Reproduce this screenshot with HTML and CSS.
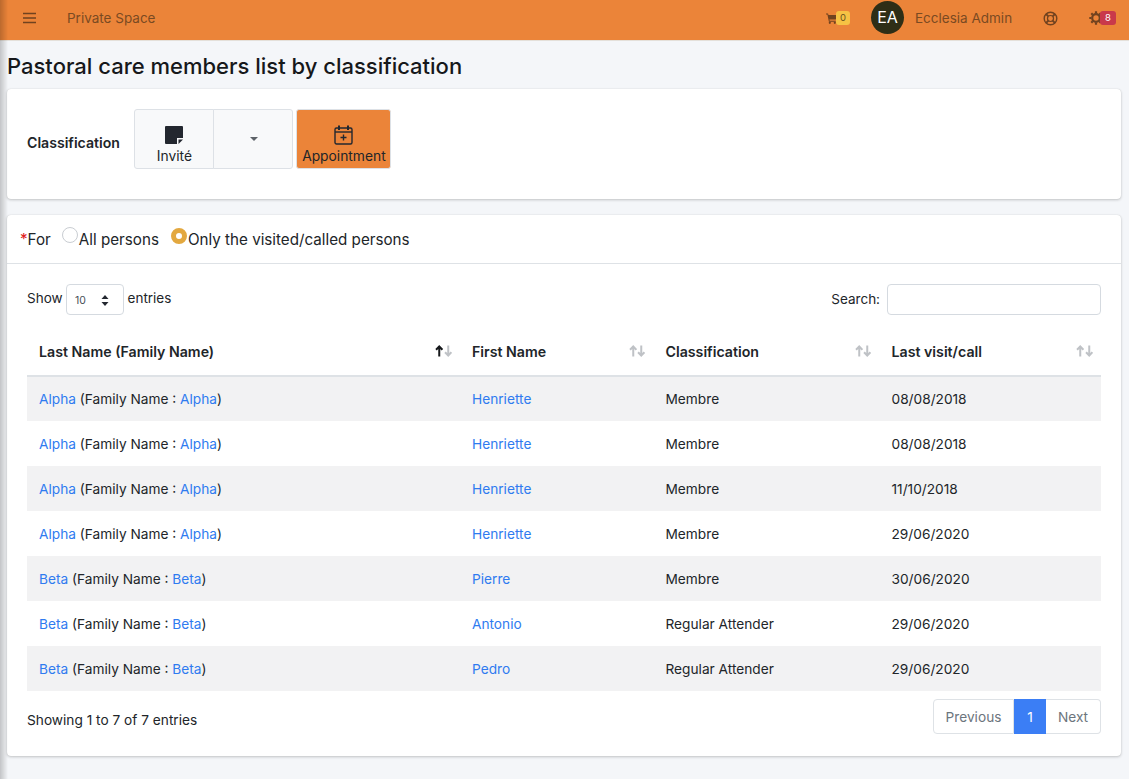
FILE: index.html
```html
<!DOCTYPE html>
<html lang="en">
<head>
    <meta charset="UTF-8">
    <meta name="viewport" content="width=device-width, initial-scale=1.0">
    <title>Pastoral care members list by classification</title>
    <link rel="stylesheet" href="styles.css">
</head>
<body>
    <div class="side-shadow"></div>
    <svg class="sprite" width="0" height="0">
        <symbol id="sort-up" viewBox="0 0 8 12"><path d="M4 11.500V1.500M.8 4.800L4 1.500l3.200 3.300" fill="none" stroke="currentColor" stroke-width="2"/></symbol>
        <symbol id="sort-down" viewBox="0 0 8 12"><path d="M4 .5v10M.8 7.200L4 10.500l3.200-3.300" fill="none" stroke="currentColor" stroke-width="2"/></symbol>
    </svg>
    <nav class="navbar">
        <div class="nav-left">
            <svg class="nav-burger" width="13" height="12" viewBox="0 0 13 12"><path d="M0 1.5h13M0 6h13M0 10.5h13" stroke="#70421f" stroke-width="1.5" fill="none"/></svg>
            <a class="nav-link" href="#">Private Space</a>
        </div>
        <div class="nav-right">
            <div class="nav-cart">
                <svg width="11" height="11" viewBox="0 0 11 11"><path d="M0 .5h2l.5 1.5H11L9.8 6.5H3.4l.3 1.2h6v1H2.9L1.4 1.5H0z" fill="#70421f"/><circle cx="3.8" cy="9.8" r="1.1" fill="#70421f"/><circle cx="8.8" cy="9.8" r="1.1" fill="#70421f"/></svg>
                <span class="badge badge-yellow">0</span>
            </div>
            <div class="avatar">EA</div>
            <a class="nav-link nav-user" href="#">Ecclesia Admin</a>
            <svg class="nav-help" width="15" height="15" viewBox="0 0 15 15" fill="none" stroke="#70421f"><circle cx="7.5" cy="7.5" r="6.3" stroke-width="1.4"/><circle cx="7.5" cy="7.5" r="3" stroke-width="1.2"/><path d="M3 3l2.4 2.4M12 3L9.6 5.4M3 12l2.4-2.4M12 12L9.6 9.6" stroke-width="1.8"/></svg>
            <div class="nav-gear">
                <svg width="14" height="14" viewBox="0 0 14 14" fill="none" stroke="#70421f"><circle cx="7" cy="7" r="3.800" stroke-width="2.200"/><path d="M7 .3v2M7 11.700v2M.3 7h2M11.700 7h2M2.300 2.300l1.400 1.400M10.300 10.300l1.400 1.400M11.700 2.300l-1.400 1.400M3.700 10.300l-1.400 1.400" stroke-width="2.200"/></svg>
                <span class="badge badge-red">8</span>
            </div>
        </div>
    </nav>

    <main class="content">
        <h1 class="page-title">Pastoral care members list by classification</h1>

        <section class="card card-filter">
            <label class="filter-label">Classification</label>
            <div class="btn-group">
                <button class="btn btn-light btn-note">
                    <svg width="18" height="18" viewBox="0 0 18 18"><path d="M1 0h16a1 1 0 0 1 1 1v11h-6v6H1a1 1 0 0 1-1-1V1a1 1 0 0 1 1-1z" fill="#23272f"/><path d="M13.500 13.500H18L13.500 18z" fill="#23272f"/></svg>
                    <span>Invité</span>
                </button>
                <button class="btn btn-light btn-caret"><span class="caret"></span></button>
            </div>
            <button class="btn btn-orange">
                <svg width="19" height="20" viewBox="0 0 19 20" fill="none" stroke="#23272f" stroke-width="1.400"><rect x="1" y="3" width="17" height="16" rx="1.500"/><path d="M1 7h17"/><path d="M5 .5v4.500M14 .5v4.500" stroke-width="2"/><path d="M9.500 9.500v6M6.500 12.500h6"/></svg>
                <span>Appointment</span>
            </button>
        </section>

        <section class="card card-list">
            <div class="list-head">
                <span class="for-label"><span class="required">*</span>For</span>
                <label class="radio-item"><span class="radio"></span>All persons</label>
                <label class="radio-item"><span class="radio radio-on"></span>Only the visited/called persons</label>
            </div>
            <div class="list-body">
                <div class="table-tools">
                    <div class="tool-length">
                        Show
                        <div class="fake-select">
                            <span>10</span>
                            <svg width="8" height="11" viewBox="0 0 8 11"><path d="M4 0l3.500 4H.5zM4 11L.5 7h7z" fill="#23272f"/></svg>
                        </div>
                        entries
                    </div>
                    <div class="tool-search"><span class="search-label">Search:</span> <input type="text" class="search-input"></div>
                </div>

                <table class="data-table">
                    <thead>
                        <tr>
                            <th class="col-last">Last Name (Family Name)<span class="sort"><svg class="on"><use href="#sort-up"/></svg><svg><use href="#sort-down"/></svg></span></th>
                            <th class="col-first">First Name<span class="sort"><svg><use href="#sort-up"/></svg><svg><use href="#sort-down"/></svg></span></th>
                            <th class="col-class">Classification<span class="sort"><svg><use href="#sort-up"/></svg><svg><use href="#sort-down"/></svg></span></th>
                            <th class="col-date">Last visit/call<span class="sort"><svg><use href="#sort-up"/></svg><svg><use href="#sort-down"/></svg></span></th>
                        </tr>
                    </thead>
                    <tbody>
                        <tr><td><a href="#">Alpha</a> (Family Name : <a href="#">Alpha</a>)</td><td><a href="#">Henriette</a></td><td>Membre</td><td>08/08/2018</td></tr>
                        <tr><td><a href="#">Alpha</a> (Family Name : <a href="#">Alpha</a>)</td><td><a href="#">Henriette</a></td><td>Membre</td><td>08/08/2018</td></tr>
                        <tr><td><a href="#">Alpha</a> (Family Name : <a href="#">Alpha</a>)</td><td><a href="#">Henriette</a></td><td>Membre</td><td>11/10/2018</td></tr>
                        <tr><td><a href="#">Alpha</a> (Family Name : <a href="#">Alpha</a>)</td><td><a href="#">Henriette</a></td><td>Membre</td><td>29/06/2020</td></tr>
                        <tr><td><a href="#">Beta</a> (Family Name : <a href="#">Beta</a>)</td><td><a href="#">Pierre</a></td><td>Membre</td><td>30/06/2020</td></tr>
                        <tr><td><a href="#">Beta</a> (Family Name : <a href="#">Beta</a>)</td><td><a href="#">Antonio</a></td><td>Regular Attender</td><td>29/06/2020</td></tr>
                        <tr><td><a href="#">Beta</a> (Family Name : <a href="#">Beta</a>)</td><td><a href="#">Pedro</a></td><td>Regular Attender</td><td>29/06/2020</td></tr>
                    </tbody>
                </table>

                <div class="table-foot">
                    <div class="table-info">Showing 1 to 7 of 7 entries</div>
                    <div class="pager">
                        <a href="#" class="page-item page-prev">Previous</a>
                        <a href="#" class="page-item page-current">1</a>
                        <a href="#" class="page-item page-next">Next</a>
                    </div>
                </div>
            </div>
        </section>
    </main>
</body>
</html>
```

FILE: styles.css
```css
* {
    box-sizing: border-box;
}

body {
    font-family: 'Inter', 'Liberation Sans', sans-serif;
    font-size: 13.7px;
    background-color: #F4F6F9;
    color: #212529;
    margin: 0;
    padding: 0;
    min-height: 100vh;
    overflow: hidden;
}

a {
    color: #2F7BF0;
    text-decoration: none;
}

.sprite {
    position: absolute;
}

.side-shadow {
    position: fixed;
    top: 0;
    left: 0;
    bottom: 0;
    width: 8px;
    background: linear-gradient(to right, rgba(0, 0, 0, 0.2), rgba(0, 0, 0, 0));
    z-index: 10;
}

.navbar {
    height: 41px;
    background: #EB8439;
    border-bottom: 1px solid #E4E0DA;
    display: flex;
    justify-content: space-between;
    align-items: center;
    padding: 0 13px 4px 23px;
}

.nav-left,
.nav-right {
    display: flex;
    align-items: center;
}

.nav-burger {
    margin-right: 31px;
}

.nav-link {
    color: #7A4A22;
    font-size: 13.5px;
}

.nav-cart {
    display: flex;
    align-items: center;
    margin-right: 21px;
}

.badge {
    font-size: 9.5px;
    line-height: 14px;
    height: 14px;
    padding: 0 4px;
    border-radius: 3px;
    text-align: center;
}

.badge-yellow {
    background: #F6C244;
    color: #6b5320;
    margin-left: -1px;
}

.badge-red {
    background: #C9394A;
    color: white;
    margin-left: -3px;
    padding: 0 5px;
}

.avatar {
    width: 33px;
    height: 33px;
    margin-top: -2px;
    border-radius: 50%;
    background: #2E2E16;
    color: white;
    font-size: 16px;
    line-height: 33px;
    text-align: center;
}

.nav-user {
    margin-left: 11px;
    margin-right: 31px;
}

.nav-help {
    margin-right: 31px;
}

.nav-gear {
    display: flex;
    align-items: center;
}

.content {
    padding: 0 8px 0 7px;
}

.page-title {
    font-size: 22px;
    font-weight: 500;
    line-height: 29px;
    margin: 0;
    padding: 11px 0 8px;
    color: #16181b;
}

.card {
    background: white;
    border-radius: 4px;
    box-shadow: 0 0 1px rgba(0, 0, 0, 0.15), 0 1px 3px rgba(0, 0, 0, 0.2);
}

.card-filter {
    height: 110px;
    margin-bottom: 16px;
    padding: 20px;
    display: flex;
    align-items: flex-start;
}

.filter-label {
    font-weight: 600;
    font-size: 14.1px;
    margin-top: 25px;
    margin-right: 14.5px;
}

.btn-group {
    display: flex;
}

.btn {
    font-family: inherit;
    font-size: 13.8px;
    height: 60px;
    border: 1px solid #DDE1E6;
    color: #212529;
    padding: 0;
    display: flex;
    flex-direction: column;
    align-items: center;
    justify-content: flex-start;
    border-radius: 3px;
}

.btn-light {
    background: #F8F9FA;
}

.btn-note {
    width: 80px;
    padding-top: 16px;
    border-radius: 3px 0 0 3px;
    gap: 4px;
}

.btn-caret {
    width: 80px;
    margin-left: -1px;
    padding-top: 27px;
    padding-left: 2px;
    border-radius: 0 3px 3px 0;
}

.caret {
    border-top: 4px solid #5d6268;
    border-left: 4px solid transparent;
    border-right: 4px solid transparent;
}

.btn-orange {
    width: 95px;
    margin-left: 3px;
    padding-top: 15px;
    background: #EB8439;
    gap: 3px;
}

.list-head {
    height: 49px;
    padding: 11px 13px 0;
    border-bottom: 1px solid #DEE2E6;
    display: flex;
    font-size: 15.2px;
    line-height: 28px;
}

.for-label {
    margin-right: 11px;
}

.required {
    color: #E02020;
}

.radio-item {
    display: flex;
    margin-right: 12px;
}

.radio {
    width: 16px;
    height: 16px;
    margin-top: 1px;
    margin-right: 1px;
    border-radius: 50%;
    border: 1px solid #C9CDD2;
    background: white;
}

.radio-on {
    border: 5px solid #E3A83F;
    margin-top: 2px;
}

.list-body {
    padding: 20px;
}

.table-tools {
    display: flex;
    justify-content: space-between;
    align-items: center;
    height: 31px;
    margin-bottom: 15px;
    font-size: 13.5px;
}

.tool-length {
    display: flex;
    align-items: center;
    gap: 3.5px;
    margin-bottom: 3px;
}

.fake-select {
    width: 58px;
    height: 31px;
    margin-top: 3px;
    padding: 1px 14px 0 8px;
    border: 1px solid #D5DAE0;
    border-radius: 4px;
    display: flex;
    justify-content: space-between;
    align-items: center;
    font-size: 10.500px;
    color: #495057;
}

.tool-search {
    display: flex;
    align-items: center;
    gap: 7px;
}

.search-label {
    margin-bottom: 2px;
}

.search-input {
    width: 214px;
    height: 31px;
    border: 1px solid #D5DAE0;
    border-radius: 4px;
    outline: none;
}

.data-table {
    width: 100%;
    border-collapse: collapse;
    table-layout: fixed;
    font-size: 13.7px;
}

.data-table th {
    position: relative;
    height: 46px;
    padding: 0 12px 2px;
    text-align: left;
    font-weight: 600;
    font-size: 14.2px;
    border-bottom: 2px solid #DEE2E6;
}

.col-last {
    width: 433px;
}

.col-first {
    width: 193.5px;
}

.col-class {
    width: 226px;
}

.sort {
    position: absolute;
    right: 8px;
    top: 15px;
    display: flex;
    color: #BFC2C6;
}

.sort svg {
    width: 8.5px;
    height: 12px;
}

.sort .on {
    color: #16181b;
}

.data-table td {
    height: 45px;
    padding: 0 12px;
}

.data-table tbody tr:nth-child(odd) {
    background: #F2F2F3;
}

.table-foot {
    display: flex;
    justify-content: space-between;
    align-items: flex-start;
    margin-top: 8px;
    padding-bottom: 2px;
}

.table-info {
    margin-top: 13px;
}

.pager {
    display: flex;
    height: 35px;
}

.page-item {
    border: 1px solid #DEE2E6;
    line-height: 34px;
    color: #6C757D;
}

.page-prev {
    width: 81px;
    border-radius: 4px 0 0 4px;
    text-align: center;
}

.page-current {
    width: 32px;
    background: #3B7EF5;
    border-color: #3B7EF5;
    color: white;
    text-align: center;
}

.page-next {
    width: 55px;
    border-left: 0;
    border-radius: 0 4px 4px 0;
    text-align: center;
}
```
